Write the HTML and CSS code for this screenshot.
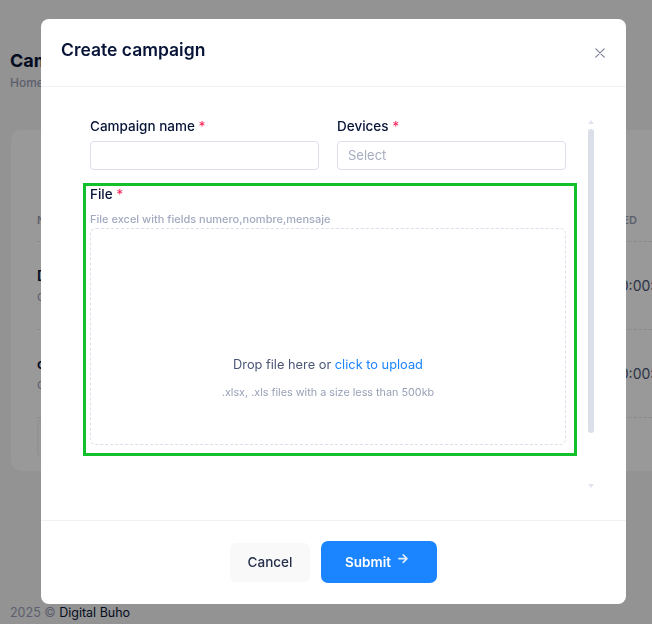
FILE: index.html
```html
<!DOCTYPE html>
<html lang="en">
<head>
<meta charset="utf-8">
<title>Create campaign</title>
<link rel="stylesheet" href="styles.css">
</head>
<body>
<div class="page">
  <div class="page-head">
    <h1 class="page-title">Campaigns</h1>
    <div class="crumbs">Home <span class="crumb-sep">-</span> Campaigns</div>
  </div>
  <div class="card">
    <div class="table">
      <div class="tr th">
        <div class="c1">Name</div>
        <div class="c2">Devices</div>
        <div class="c3">Status</div>
        <div class="c4">Created</div>
      </div>
      <div class="tr">
        <div class="c1"><div class="strong">Demo campaign</div><div class="muted">campaign_01.xlsx</div></div>
        <div class="c2">Device 1</div>
        <div class="c3">Sent</div>
        <div class="c4 val"><span>2025-01-15 10:00:00</span></div>
      </div>
      <div class="tr">
        <div class="c1"><div class="strong">campaign test</div><div class="muted">campaign_02.xlsx</div></div>
        <div class="c2">Device 2</div>
        <div class="c3">Sent</div>
        <div class="c4 val"><span>2025-01-16 10:00:00</span></div>
      </div>
      <div class="pager"><span class="pager-box">10</span></div>
    </div>
  </div>
  <div class="page-foot"><span class="muted-foot">2025 &copy;</span> Digital Buho</div>
</div>

<div class="backdrop"></div>

<div class="modal">
  <div class="modal-head">
    <h2 class="modal-title">Create campaign</h2>
    <button class="close" aria-label="Close">
      <svg width="10" height="10" viewBox="0 0 10 10"><path d="M0.8 0.8L9.2 9.2M9.2 0.8L0.8 9.2" stroke="#7e8299" stroke-width="1.2" fill="none" stroke-linecap="round"/></svg>
    </button>
  </div>
  <div class="modal-body">
    <div class="form">
      <div class="row2">
        <div class="field">
          <label class="label">Campaign name <span class="req">*</span></label>
          <div class="input"></div>
        </div>
        <div class="field">
          <label class="label">Devices <span class="req">*</span></label>
          <div class="input placeholder">Select</div>
        </div>
      </div>
      <div class="file-group">
        <label class="label">File <span class="req">*</span></label>
        <div class="hint">File excel with fields numero,nombre,mensaje</div>
        <div class="dropzone">
          <div class="dz-main">Drop file here or <span class="link">click to upload</span></div>
          <div class="dz-sub">.xlsx, .xls files with a size less than 500kb</div>
        </div>
      </div>
    </div>
    <div class="scrollbar">
      <div class="sb-up"></div>
      <div class="sb-thumb"></div>
      <div class="sb-space"></div>
      <div class="sb-down"></div>
    </div>
  </div>
  <div class="modal-foot">
    <button class="btn btn-light">Cancel</button>
    <button class="btn btn-primary">Submit
      <svg class="arrow" width="11" height="10" viewBox="0 0 11 10"><path d="M0.8 4.6H8.6M5.2 0.9L9 4.6L5.2 8.4" stroke="#ffffff" stroke-opacity="0.85" stroke-width="1.6" fill="none" stroke-linecap="round" stroke-linejoin="round"/></svg>
    </button>
  </div>
</div>
</body>
</html>
```

FILE: styles.css
```css
* { box-sizing: border-box; }

html, body {
  margin: 0;
  height: 100%;
}

body {
  background: #f5f5f5;
  font-family: Inter, "Noto Sans", "Liberation Sans", sans-serif;
  color: #071437;
  overflow: hidden;
}

/* ---------- background page ---------- */
.page {
  height: 624px;
  padding: 0 0 0 10px;
  display: flex;
  flex-direction: column;
}

.page-head {
  padding-top: 50px;
}

.page-title {
  margin: 0;
  font-size: 18px;
  line-height: 22px;
  font-weight: 700;
  color: #071437;
}

.crumbs {
  margin-top: 3px;
  font-size: 12px;
  line-height: 16px;
  font-weight: 500;
  color: #99a1b7;
}

.crumb-sep { margin: 0 4px; }

.card {
  margin-top: 39px;
  margin-left: 1px;
  width: 700px;
  height: 341px;
  background: #ffffff;
  border-radius: 10px;
  padding: 83px 0 0 26px;
}

.tr {
  display: flex;
  align-items: center;
  width: 635px;
  border-bottom: 1px dashed #e4e6ef;
  height: 88px;
}

.tr.th {
  height: 29px;
  font-size: 11px;
  line-height: 14px;
  font-weight: 600;
  text-transform: uppercase;
  color: #99a1b7;
  align-items: flex-start;
}

.c1 { width: 200px; }
.c2 { width: 160px; font-size: 13px; color: #4b5675; }
.c3 { width: 189px; font-size: 13px; color: #4b5675; }
.c4 { width: 86px; }
.th .c2, .th .c3 { font-size: 11px; color: #99a1b7; }
.c4.val {
  display: flex;
  justify-content: flex-end;
  white-space: nowrap;
  font-size: 14px;
  color: #4b5675;
}
.c4.val span { flex: none; }

.strong {
  font-size: 14px;
  font-weight: 600;
  color: #071437;
  line-height: 20px;
}

.muted {
  font-size: 13px;
  color: #99a1b7;
  line-height: 20px;
}

.pager {
  padding-top: 0;
}

.pager-box {
  display: inline-block;
  width: 60px;
  height: 40px;
  border: 1px solid #f1f1f4;
  border-radius: 6px;
  background: #fcfcfc;
  color: transparent;
}

.page-foot {
  margin-top: auto;
  padding-bottom: 2px;
  font-size: 12.5px;
  line-height: 18px;
  font-weight: 400;
  color: #071437;
}

.muted-foot { color: #99a1b7; }

/* ---------- overlay ---------- */
.backdrop {
  position: fixed;
  inset: 0;
  background: rgba(0, 0, 0, 0.4);
}

.modal {
  position: fixed;
  left: 41px;
  top: 19px;
  width: 585px;
  height: 585px;
  background: #ffffff;
  border-radius: 8px;
  display: flex;
  flex-direction: column;
  overflow: hidden;
}

.modal-head {
  display: flex;
  justify-content: space-between;
  align-items: flex-start;
  padding: 17px 21px 22px 20px;
  border-bottom: 1px solid #f1f1f4;
  height: 68px;
}

.modal-title {
  margin: 0;
  font-size: 17.5px;
  line-height: 27px;
  font-weight: 600;
  color: #071437;
}

.close {
  margin-top: 12px;
  width: 10px;
  height: 10px;
  padding: 0;
  border: 0;
  background: none;
  display: flex;
}

.modal-body {
  height: 433px;
  display: flex;
  padding: 31px 32px 0 49px;
}

.form {
  width: 476px;
  display: flex;
  flex-direction: column;
}

.row2 {
  display: grid;
  grid-template-columns: 229px 229px;
  column-gap: 18px;
}

.label {
  display: block;
  font-size: 13.5px;
  line-height: 16px;
  font-weight: 500;
  color: #071437;
}

.req { color: #f8285a; }

.input {
  margin-top: 7px;
  height: 29px;
  border: 1px solid #dbdfe9;
  border-radius: 4px;
  padding: 0 10px;
  font-size: 13px;
  line-height: 27px;
}

.placeholder { color: #a8aec0; }

.file-group {
  margin: 13px -11px 0 -7px;
  border: 3px solid #12c02c;
  padding: 0 8px 8px 4px;
}

.hint {
  margin-top: 9px;
  font-size: 11px;
  line-height: 16px;
  font-weight: 500;
  color: #a3aac0;
}

.dropzone {
  margin-top: 1px;
  height: 217px;
  border: 1px dashed #dbdfe9;
  border-radius: 6px;
  padding-top: 126px;
  text-align: center;
}

.dz-main {
  font-size: 12.8px;
  line-height: 20px;
  color: #4b5675;
}

.link { color: #1b84ff; }

.dz-sub {
  margin-top: 10px;
  font-size: 10.8px;
  line-height: 16px;
  color: #99a1b7;
}

.scrollbar {
  margin-left: 22px;
  margin-top: -1px;
  width: 6px;
  height: 371px;
  display: flex;
  flex-direction: column;
  align-items: center;
  padding-top: 3px;
}

.sb-up {
  width: 0;
  height: 0;
  border-left: 3px solid transparent;
  border-right: 3px solid transparent;
  border-bottom: 4px solid #e1e4ec;
}

.sb-thumb {
  margin-top: 5px;
  width: 6px;
  height: 304px;
  border-radius: 3px;
  background: #dbdfe9;
}

.sb-space { flex: 1; }

.sb-down {
  width: 0;
  height: 0;
  border-left: 3px solid transparent;
  border-right: 3px solid transparent;
  border-top: 4px solid #e1e4ec;
}

.modal-foot {
  flex: 1;
  border-top: 1px solid #f1f1f4;
  display: flex;
  justify-content: center;
  align-items: center;
  gap: 11px;
  padding-bottom: 1px;
}

.btn {
  border: 0;
  font-family: inherit;
  display: inline-flex;
  align-items: center;
  justify-content: center;
}

.btn-light {
  width: 80px;
  height: 39px;
  background: #f9f9f9;
  border-radius: 6px;
  color: #252f4a;
  font-size: 13.5px;
  font-weight: 500;
}

.btn-primary {
  width: 116px;
  height: 42px;
  background: #1b84ff;
  border-radius: 7px;
  color: #ffffff;
  font-size: 13.5px;
  font-weight: 600;
  gap: 7px;
  padding: 0 4px 1px 0;
}

.arrow {
  margin-top: -5px;
}
```
